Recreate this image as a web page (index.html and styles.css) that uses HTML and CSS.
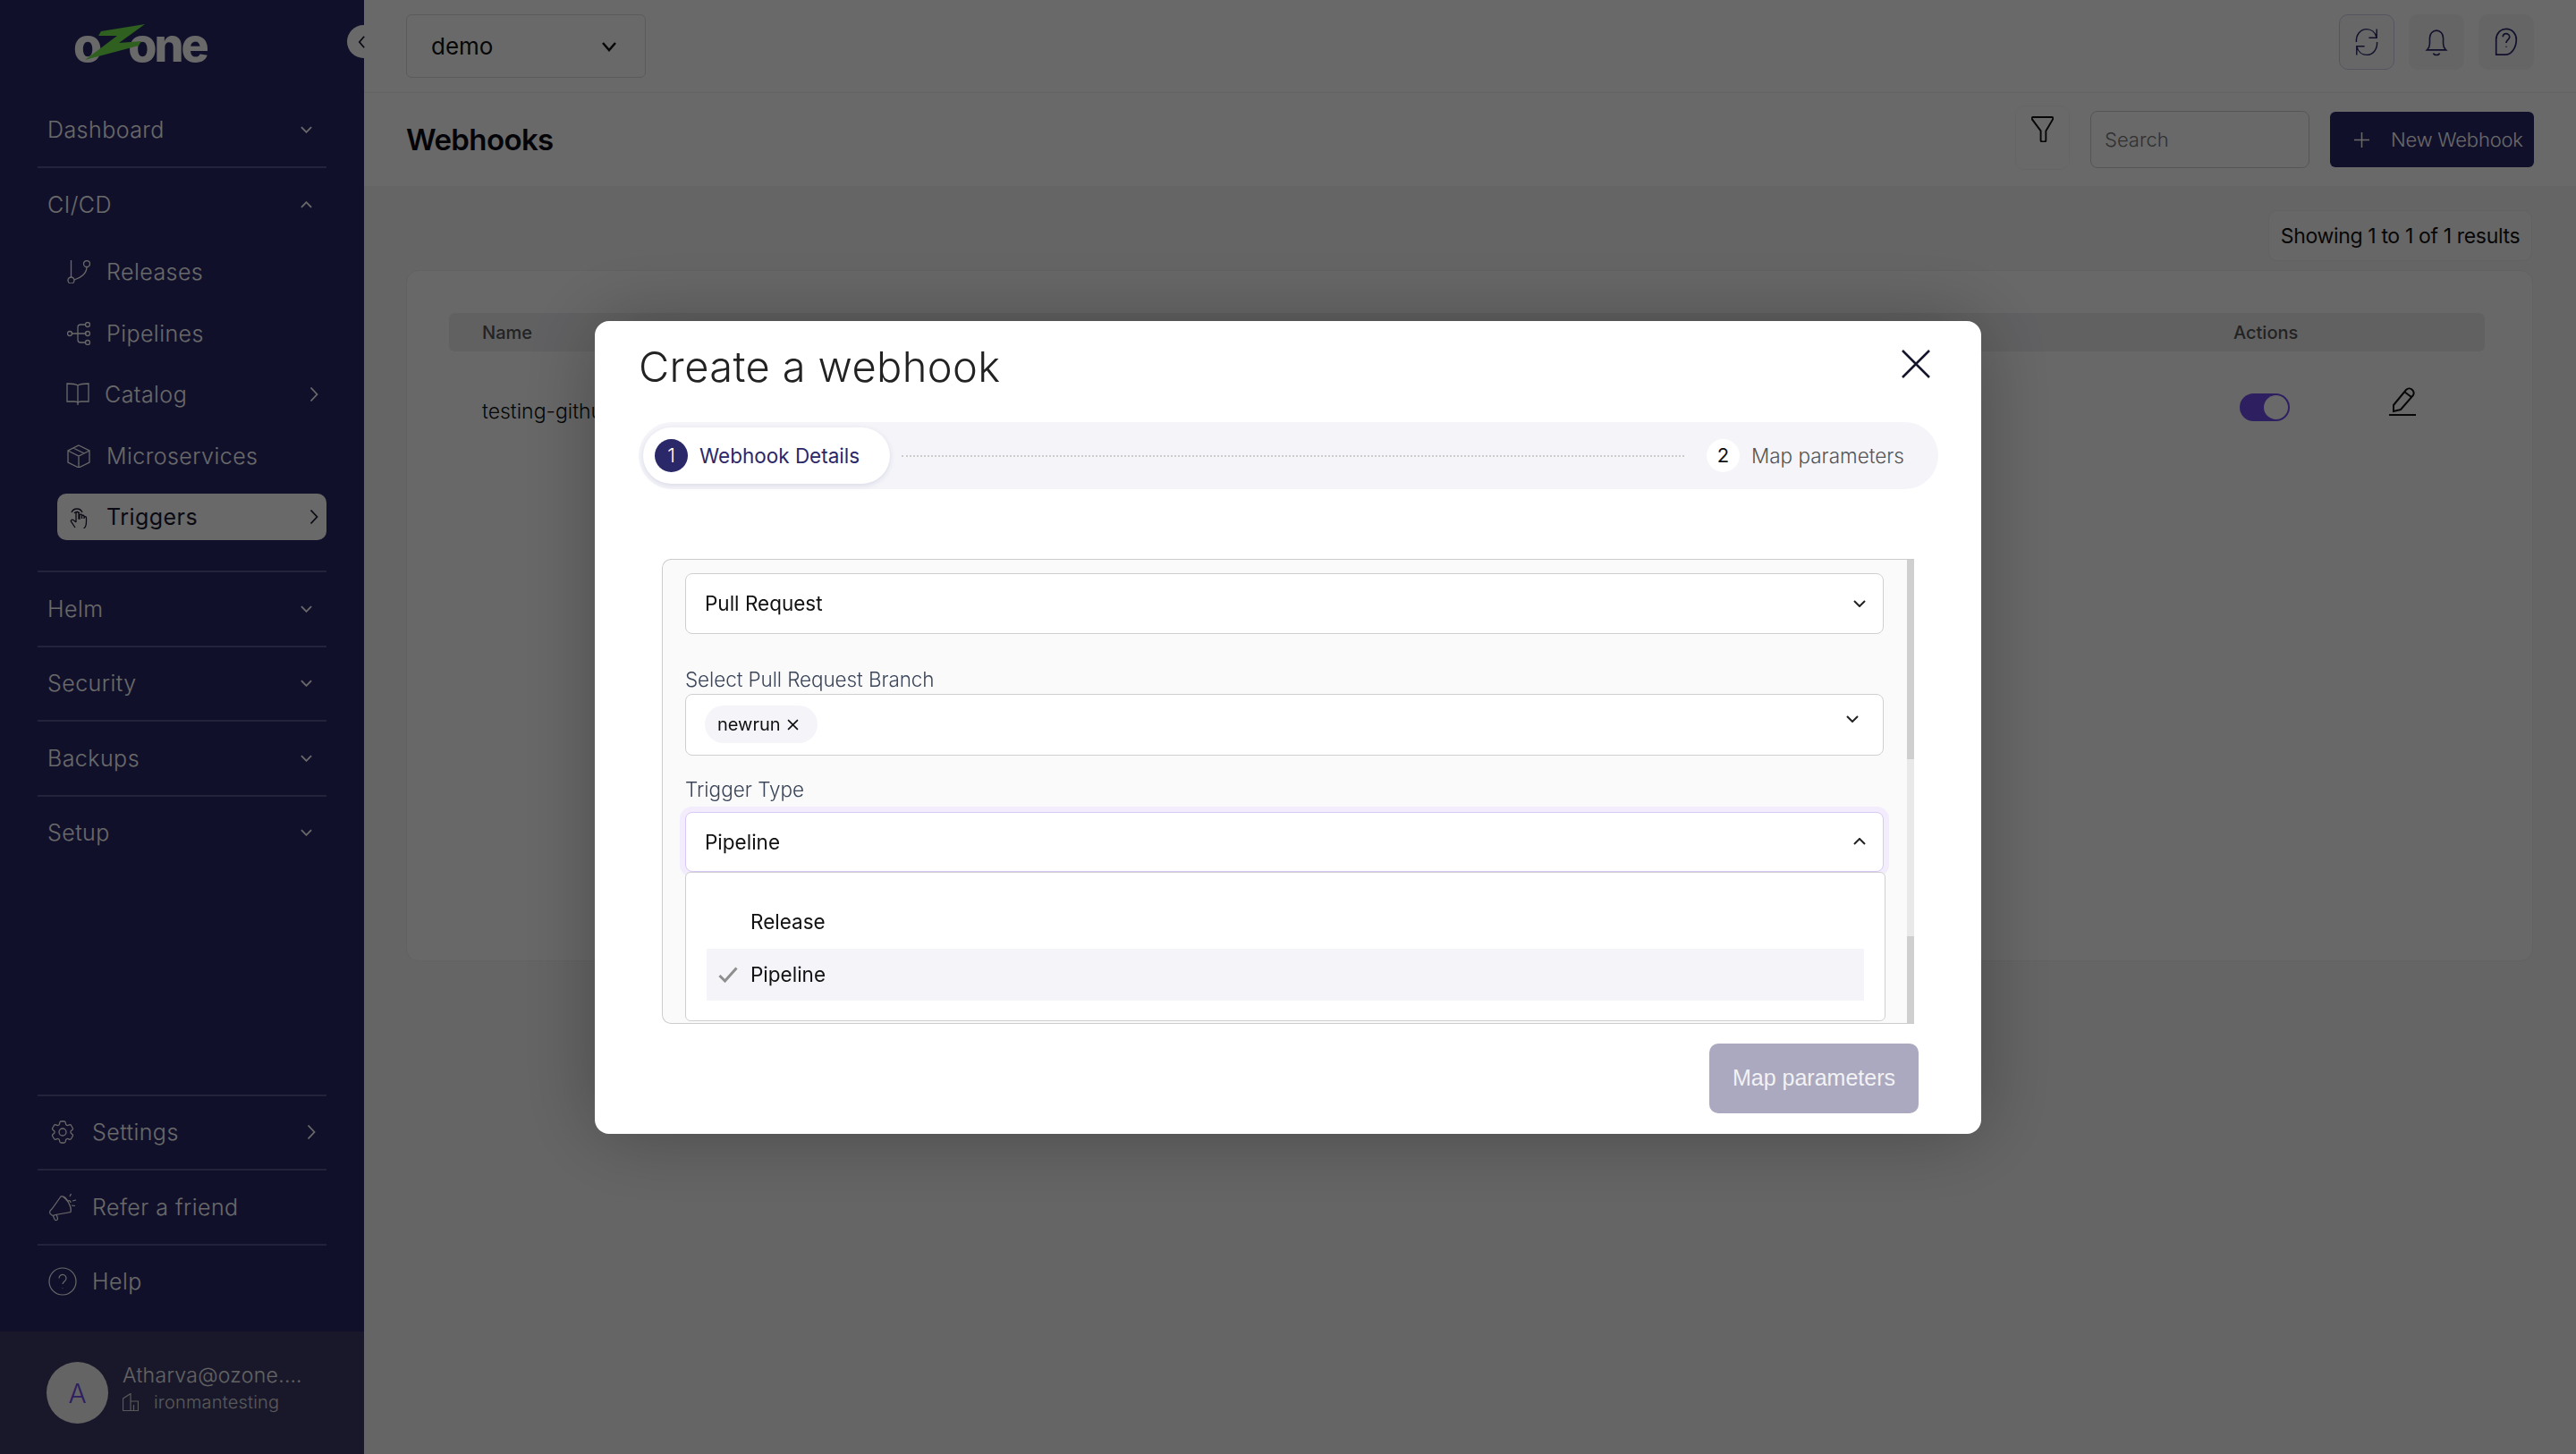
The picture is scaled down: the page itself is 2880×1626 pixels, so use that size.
FILE: index.html
```html
<!DOCTYPE html>
<html lang="en">
<head>
<meta charset="utf-8">
<title>Webhooks</title>
<link rel="stylesheet" href="styles.css">
</head>
<body>
<div class="app">
  <aside class="sidebar">
    <div class="logo"><span>o</span><svg class="bolt" viewBox="0 0 67 40"><polygon points="67,0 18,8 15,13 36,13 0,40 60,24 63,19 38,21"/></svg><span>one</span></div>
    <button class="collapse"><svg viewBox="0 0 10 18"><path d="M8 2 2 9l6 7"/></svg></button>
    <nav class="nav">
      <div class="group"><span class="gl">Dashboard</span><svg class="chev" viewBox="0 0 14 8"><path d="M1 1l6 6 6-6"/></svg></div>
      <div class="group open"><span class="gl">CI/CD</span><svg class="chev" viewBox="0 0 14 8"><path d="M1 7l6-6 6 6"/></svg></div>
      <div class="subs">
        <div class="sub"><svg class="ic" viewBox="0 0 26 26"><path d="M4.5 0v19M22 7.5C22 15 15 20 8 22"/><circle cx="4.5" cy="22.5" r="3.5"/><circle cx="22" cy="4" r="3.5"/></svg><span>Releases</span></div>
        <div class="sub"><svg class="ic" viewBox="0 0 26 26"><circle cx="3" cy="13" r="2.5"/><path d="M5.5 13h16M12 13V6a3 3 0 0 1 3-3h6M12 13v7a3 3 0 0 0 3 3h6"/><circle cx="23" cy="3" r="2.5"/><circle cx="23" cy="13" r="2.5"/><circle cx="23" cy="23" r="2.5"/></svg><span>Pipelines</span></div>
        <div class="sub cat"><svg class="ic" viewBox="0 0 26 26"><path d="M13 23V3C10 1 5 1 1 1v20h8c2 0 4 .5 4 2zM13 3c3-2 8-2 12-2v20h-8c-2 0-4 .5-4 2v2"/></svg><span>Catalog</span><svg class="chr" viewBox="0 0 10 18"><path d="M1.500 1.500 8.500 9l-7 7.500"/></svg></div>
        <div class="sub"><svg class="ic" viewBox="0 0 26 26"><path d="M13 1 25 7v13l-12 6-12-6V7zM1 7l12 6 12-6M13 13v13M7 4l12 6"/></svg><span>Microservices</span></div>
        <div class="sub active"><svg class="ic" viewBox="0 0 26 26"><path d="M5 8a6.500 6.500 0 0 1 12 0M8 9a3.500 3.500 0 0 1 6 0M10 19V9a1.500 1.500 0 0 1 3 0v6l1 0V11a1.300 1.300 0 0 1 2.500 0v4V12a1.300 1.300 0 0 1 2.500 0v3 0-1a1.200 1.200 0 0 1 2.500 0v4c0 4-1 7-3 8M10 19l-3-2.500c-2-1-3.500 1-2 2.500l4 6"/></svg><span>Triggers</span><svg class="chr" viewBox="0 0 10 18"><path d="M1.500 1.500 8.500 9l-7 7.500"/></svg></div>
      </div>
      <div class="group top"><span class="gl">Helm</span><svg class="chev" viewBox="0 0 14 8"><path d="M1 1l6 6 6-6"/></svg></div>
      <div class="group top"><span class="gl">Security</span><svg class="chev" viewBox="0 0 14 8"><path d="M1 1l6 6 6-6"/></svg></div>
      <div class="group top"><span class="gl">Backups</span><svg class="chev" viewBox="0 0 14 8"><path d="M1 1l6 6 6-6"/></svg></div>
      <div class="group top"><span class="gl">Setup</span><svg class="chev" viewBox="0 0 14 8"><path d="M1 1l6 6 6-6"/></svg></div>
    </nav>
    <div class="bottom">
      <div class="bitem"><svg class="bic" viewBox="0 0 24 24"><path d="M9.594 3.940c.09-.542.56-.94 1.110-.94h2.593c.55 0 1.020.398 1.110.94l.213 1.281c.063.374.313.686.645.870.074.04.147.083.22.127.325.196.72.257 1.075.124l1.217-.456a1.125 1.125 0 0 1 1.370.49l1.296 2.247a1.125 1.125 0 0 1-.26 1.431l-1.003.827c-.293.241-.438.613-.43.992a7.723 7.723 0 0 1 0 .255c-.008.378.137.75.43.991l1.004.827c.424.35.534.955.26 1.430l-1.298 2.247a1.125 1.125 0 0 1-1.369.491l-1.217-.456c-.355-.133-.75-.072-1.076.124a6.470 6.470 0 0 1-.22.128c-.331.183-.581.495-.644.869l-.213 1.281c-.09.543-.56.94-1.110.94h-2.594c-.55 0-1.019-.398-1.110-.94l-.213-1.281c-.062-.374-.312-.686-.644-.87a6.520 6.520 0 0 1-.22-.127c-.325-.196-.72-.257-1.076-.124l-1.217.456a1.125 1.125 0 0 1-1.369-.49l-1.297-2.247a1.125 1.125 0 0 1 .26-1.431l1.004-.827c.292-.24.437-.613.43-.991a6.932 6.932 0 0 1 0-.255c.007-.38-.138-.751-.43-.992l-1.004-.827a1.125 1.125 0 0 1-.26-1.430l1.297-2.247a1.125 1.125 0 0 1 1.370-.491l1.216.456c.356.133.751.072 1.076-.124.072-.044.146-.086.22-.128.332-.183.582-.495.644-.869l.214-1.280Z"/><circle cx="12" cy="12" r="3"/></svg><span>Settings</span><svg class="chr" viewBox="0 0 10 18"><path d="M1.500 1.500 8.500 9l-7 7.500"/></svg></div>
      <div class="bitem"><svg class="bic" viewBox="0 0 32 32"><path d="M14 4 4 18c-3 2-3 5-1 6 1 1.500 3 1.500 5 .5l17-3c1-3-1-8-3-12S17 3 14 4zM14 4c2-1 5 2 8 6s4 9 3 11.500M5 25l2 4.500c1 2 4 1 3.500-1L9 24M22 9c2-1 3 .5 3 2M24 4l1.500-3M27 9l4-1M26 14l4 .5"/></svg><span>Refer a friend</span></div>
      <div class="bitem"><svg class="bic" viewBox="0 0 32 32"><circle cx="16" cy="16" r="15"/><path d="M12 12.500a4 4 0 1 1 6.500 3c-1.500 1.200-2.500 2-2.500 3.500M16 23v.5"/></svg><span>Help</span></div>
    </div>
    <div class="account">
      <div class="avatar">A</div>
      <div class="who">
        <div class="email">Atharva@ozone.one</div>
        <div class="org"><svg class="bld" viewBox="0 0 18 20"><path d="M.5 19.500V6L9 .5v19zM9 9h8.500v10.500M0 19.500h18M12.500 13v6"/></svg><span>ironmantesting</span></div>
      </div>
    </div>
  </aside>

  <main class="main">
    <header class="topbar">
      <div class="tenant"><span>demo</span><svg viewBox="0 0 18 12"><path d="M2 2l7 8 7-8"/></svg></div>
      <div class="tools">
        <button class="tool on"><svg viewBox="0 0 32 40"><path d="M30 14C28 6 22 2 16 2 7 2 1 10 1.500 20M30 2v12H19M2 26c2 8 8 12 14 12 9 0 15-8 14.500-18M2 38V26h11"/></svg></button>
        <button class="tool"><svg viewBox="0 0 26 36"><path d="M1 28c2-2 3.500-3 3.500-8v-7a8.500 9.500 0 0 1 17 0v7c0 5 1.500 6 3.500 8zM9 32c1 3 7 3 8 0"/></svg></button>
        <button class="tool"><svg viewBox="0 0 26 34"><path d="M1 32V14C1 7 6 1.500 13 1.500S25 7 25 14c0 10-6 18-13 18zM9 11c0-3 2-4 4-4s4 2 4 4c0 3-4 3.500-4 7M13 22v1"/></svg></button>
      </div>
    </header>
    <section class="pagehead">
      <h1>Webhooks</h1>
      <div class="actions">
        <button class="filter"><svg viewBox="0 0 26 30"><path d="M2 1h22c1 0 1.500 1 1 2.500L17 17v11c0 1.500-1 1.500-2 1.500h-2c-1.500 0-2-.5-2-1.500V17L1 3.500C.5 2 1 1 2 1z"/></svg></button>
        <div class="search">Search</div>
        <button class="new"><svg viewBox="0 0 18 18"><path d="M9 0v18M0 9h18"/></svg><span>New Webhook</span></button>
      </div>
    </section>
    <section class="content">
      <div class="countwrap"><div class="count">Showing 1 to 1 of 1 results</div></div>
      <div class="card">
        <div class="thead"><span>Name</span><span>Actions</span></div>
        <div class="trow">
          <span class="tname">testing-github</span>
          <div class="tact">
            <span class="toggle"><i></i></span>
            <svg class="pencil" viewBox="0 0 30 32"><path d="M5 20 19 3c2-2 5-2 7 0s2 4 1 6L13 25l-8 2zM17 5l8 6M0 31h30"/></svg>
          </div>
        </div>
      </div>
    </section>
  </main>
</div>

<div class="overlay">
  <div class="modal">
    <div class="mhead">
      <h2>Create a webhook</h2>
      <svg class="close" viewBox="0 0 32 32"><path d="M1 1l30 30M31 1 1 31"/></svg>
    </div>
    <div class="stepper">
      <div class="step active"><b>1</b><span>Webhook Details</span></div>
      <div class="dots"></div>
      <div class="step next"><b>2</b><span>Map parameters</span></div>
    </div>
    <div class="frame">
      <div class="form">
        <div class="select first"><span>Pull Request</span><svg class="sel-chev" viewBox="0 0 14 8"><path d="M1 1l6 6 6-6"/></svg></div>
        <label class="lab lab1">Select Pull Request Branch</label>
        <div class="multi"><span class="chip">newrun<svg viewBox="0 0 12 12"><path d="M1 1l10 10M11 1 1 11"/></svg></span><svg class="sel-chev" viewBox="0 0 14 8"><path d="M1 1l6 6 6-6"/></svg></div>
        <label class="lab lab2">Trigger Type</label>
        <div class="select focus"><span>Pipeline</span><svg class="sel-chev" viewBox="0 0 14 8"><path d="M1 7l6-6 6 6"/></svg></div>
        <div class="drop">
          <div class="opt"><span>Release</span></div>
          <div class="opt sel"><svg viewBox="0 0 22 18"><path d="M1.500 10l6 6L20.500 1.500"/></svg><span>Pipeline</span></div>
        </div>
        <label class="lab lab3">Select Pipeline Name</label>
      </div>
      <div class="bar"><i class="t1"></i><i class="t2"></i><i class="t3"></i></div>
    </div>
    <div class="mfoot"><button class="primary">Map parameters</button></div>
  </div>
</div>
</body>
</html>
```

FILE: styles.css
```css
* { box-sizing: border-box; }
html, body { margin: 0; height: 100%; }
body { width: 2880px; height: 1626px; overflow: hidden; font-family: Inter, "Noto Sans", sans-serif; color: #1a1a33; background: #f4f4f7; }
button { font: inherit; border: 0; padding: 0; background: none; color: inherit; }
svg { fill: none; stroke: currentColor; display: block; flex: none; }
h1, h2 { margin: 0; font-weight: 400; }

.app { display: flex; height: 1626px; }

/* sidebar */
.sidebar { position: relative; width: 407px; flex: none; display: flex; flex-direction: column; background: #2a2869; color: #fff; font-size: 25px; }
.logo { height: 104px; padding: 27px 0 0 82px; display: flex; align-items: flex-start; font-size: 52px; font-weight: 800; letter-spacing: -3px; line-height: 40px; color: #fff; }
.logo span { display: block; padding-top: 4px; }
.bolt { width: 67px; height: 40px; margin: 0 -19px 0 -16px; fill: #72e84e; stroke: none; position: relative; z-index: 1; }
.collapse { position: absolute; left: 388px; top: 28px; width: 37px; height: 37px; border-radius: 50%; background: #fff; display: flex; align-items: center; justify-content: center; color: #1a1a33; z-index: 2; padding-right: 5px; }
.collapse svg { width: 9px; height: 16px; stroke-width: 2; }

.nav { padding: 0 42px; }
.group { height: 84px; padding: 0 15px 0 11px; display: flex; align-items: center; justify-content: space-between; }
.group:first-child { border-bottom: 2px solid #575591; }
.group.open { height: 82px; }
.group.top { height: 83.500px; border-top: 2px solid #575591; }
.gl { letter-spacing: .45px; font-weight: 300; }
.chev { width: 13px; height: 8px; stroke-width: 2; margin-right: 1px; }
.subs { padding: 0 0 34px 22px; }
.sub { height: 68.500px; display: flex; align-items: center; padding-left: 11px; font-weight: 300; letter-spacing: .45px; }
.sub .ic { width: 26px; height: 26px; stroke-width: 1.300; margin-right: 18px; }
.sub.cat .ic { margin-left: -1px; margin-right: 17px; }
.sub .chr { margin-left: auto; width: 10px; height: 18px; stroke-width: 1.800; margin-right: 9px; }
.sub.active { height: 52px; margin-top: 8px; background: #fff; color: #1a1a33; border-radius: 10px; font-weight: 400; }

.bottom { margin-top: auto; padding: 0 42px 15px; }
.bitem { height: 83.500px; display: flex; align-items: center; padding-left: 12px; border-top: 2px solid #575591; font-weight: 300; letter-spacing: .45px; }
.bic { width: 32px; height: 32px; stroke-width: 1.200; margin-right: 17px; }
.bitem .chr { margin-left: auto; width: 10px; height: 18px; stroke-width: 1.800; margin-right: 12px; }
.bitem:first-child .bic { stroke-width: .95; }
.account { height: 137px; background: #3e3c68; padding: 34px 0 0 52px; display: flex; gap: 16px; }
.avatar { width: 69px; height: 69px; border-radius: 50%; background: #f3f3f5; color: #6f4cea; display: flex; align-items: center; justify-content: center; font-size: 30px; font-weight: 300; }
.who { width: 204px; }
.email { font-size: 23px; font-weight: 300; line-height: 30px; letter-spacing: .3px; white-space: nowrap; overflow: hidden; text-overflow: ellipsis; color: #f0f0f0; }
.org { display: flex; align-items: center; gap: 17px; font-size: 20px; font-weight: 300; line-height: 30px; margin-top: 0; white-space: nowrap; letter-spacing: .2px; color: #d8d8d8; }
.bld { width: 18px; height: 20px; stroke-width: 1.200; }

/* main */
.main { flex: 1; min-width: 0; display: flex; flex-direction: column; }
.topbar { height: 104px; flex: none; background: #fff; border-bottom: 1px solid #f0f0f2; padding: 16px 47px 0; display: flex; justify-content: space-between; align-items: flex-start; }
.tenant { width: 268px; height: 71px; border: 1px solid #dcdcdc; border-radius: 6px; display: flex; align-items: center; justify-content: space-between; padding: 0 31px 0 27px; font-size: 26px; color: #111; }
.tenant svg { width: 18px; height: 12px; stroke-width: 2.500; }
.tools { display: flex; gap: 16px; }
.tool { width: 62px; height: 62px; border-radius: 10px; background: #f6f6f8; display: flex; align-items: center; justify-content: center; color: #2a2869; }
.tool.on { border: 1px solid #cfcfe8; background: #fafafa; }
.tool svg { height: 32px; width: 26px; stroke-width: 1.800; }
.pagehead { height: 104px; flex: none; background: #fff; padding: 0 47px; display: flex; align-items: center; justify-content: space-between; }
h1 { font-size: 33px; font-weight: 600; color: #0c0c14; letter-spacing: -.6px; }
.actions { display: flex; align-items: center; }
.filter { width: 61px; height: 72px; margin: -4px 23px 0 0; border: 1px solid #f6f6f6; border-radius: 10px; display: flex; align-items: center; justify-content: center; color: #111; padding-bottom: 20px; }
.filter svg { width: 25px; height: 29px; stroke-width: 2; }
.search { width: 245px; height: 64px; border: 1px solid #cfcfcf; border-radius: 8px; display: flex; align-items: center; padding-left: 15px; color: #777; font-size: 22px; font-weight: 300; margin-right: 23px; }
.new { width: 228px; height: 62px; background: #2a2869; color: #fff; border-radius: 6px; display: flex; align-items: center; padding-left: 27px; font-size: 22px; font-weight: 300; gap: 24px; white-space: nowrap; letter-spacing: -.2px; }
.new svg { width: 17px; height: 17px; stroke-width: 1.600; }
.content { flex: 1; padding: 27px 48px 0 47px; }
.countwrap { display: flex; justify-content: flex-end; }
.count { height: 57px; width: 295px; margin-right: 1px; border: 1px solid #ededed; border-radius: 10px; background: #fbfbfb; display: flex; align-items: center; justify-content: center; font-size: 23px; color: #111; white-space: nowrap; letter-spacing: -.35px; }
.card { height: 773px; margin-top: 10px; background: #fdfdfd; border: 1px solid #ededed; border-radius: 14px; padding: 47px 53px 0 47px; }
.thead { height: 43px; background: #ececef; border-radius: 6px; display: grid; grid-template-columns: 1958px 1fr; align-items: center; padding-left: 37px; margin-left: 0; font-size: 20px; color: #555; font-weight: 500; }
.thead span:first-child, .tname { grid-column: 1; }
.trow { display: grid; grid-template-columns: 1958px 1fr; padding-left: 37px; height: 110px; }
.tname { font-size: 23px; color: #111; font-weight: 300; padding-top: 53px; }
.tact { display: flex; align-items: flex-start; padding: 47px 0 0 7px; gap: 111px; }
.toggle { width: 56px; height: 31px; border-radius: 16px; background: #6f4cea; padding: 2px; display: flex; justify-content: flex-end; }
.toggle i { width: 27px; height: 27px; border-radius: 50%; background: #fff; }
.pencil { width: 30px; height: 32px; stroke-width: 2; color: #111; margin-top: -7px; }

/* overlay + modal */
.overlay { position: fixed; inset: 0; z-index: 10; background: rgba(0, 0, 0, .59); display: flex; align-items: center; justify-content: center; }
.modal { width: 1550px; height: 909px; background: #fff; border-radius: 16px; box-shadow: 0 0 90px rgba(0, 0, 0, .28); display: flex; flex-direction: column; color: #111; }
.mhead { height: 113px; flex: none; padding: 32px 57px 0 49px; display: flex; justify-content: space-between; align-items: flex-start; }
h2 { font-size: 47px; font-weight: 300; color: #222; line-height: 38px; padding-top: 0; letter-spacing: .4px; }
.close { width: 32px; height: 32px; stroke-width: 2.500; color: #14142b; margin-top: 0; }
.stepper { height: 75px; flex: none; margin: 0 48px 0 49px; background: #f4f4f9; border-radius: 38px; display: flex; align-items: center; padding: 0 38px 0 5px; font-size: 22.500px; }
.step { display: flex; align-items: center; white-space: nowrap; }
.step b { width: 37px; height: 37px; border-radius: 50%; display: flex; align-items: center; justify-content: center; font-weight: 400; font-size: 22px; flex: none; }
.step.active { width: 276px; height: 63px; background: #fff; border-radius: 32px; box-shadow: 0 2px 6px rgba(42, 40, 104, .12); padding-left: 13px; gap: 13px; color: #2a2868; }
.step.active b { background: #2a2868; color: #fff; font-weight: 300; }
.step.next { gap: 13px; color: #555; font-weight: 300; }
.step.next b { background: #fff; color: #111; }
.dots { flex: 1; margin: 2px 25px 0 13px; border-top: 2px dotted #ccc; }
.frame { height: 520px; flex: none; margin: 78px 75px 0; display: flex; border-top: 1px solid #ccc; border-bottom: 1px solid #ccc; border-left: 1px solid #ccc; border-radius: 10px 0 0 10px; background: #fafafa; overflow: hidden; }
.form { flex: 1; min-width: 0; padding: 15px 26px 0 25px; font-size: 22.500px; overflow: hidden; }
.select, .multi { display: flex; align-items: center; justify-content: space-between; background: #fff; border: 1px solid #cfcfcf; border-radius: 8px; }
.select { padding: 0 19px 0 21px; height: 68px; }
.multi { height: 69px; padding: 0 27px 12px 21px; }
.multi .chip { margin-top: 12px; }
.select.focus { height: 67px; border-color: #d8c8f5; box-shadow: 0 0 0 6px #f2ecfd; position: relative; }
.sel-chev { width: 14px; height: 8px; stroke-width: 2; color: #222; }
.lab { display: block; line-height: 24px; color: #3b4559; font-weight: 300; }
.lab1 { margin: 39px 0 4px; letter-spacing: -.1px; }
.lab2 { margin: 26px 0 13px; }
.chip { display: flex; align-items: center; gap: 7px; height: 42px; padding: 0 21px 0 14px; border-radius: 21px; background: #f4f4f9; font-size: 20px; font-weight: 400; color: #111; }
.chip svg { width: 13px; height: 13px; stroke-width: 1.500; }
.drop { position: relative; height: 167px; margin-right: -2px; background: #fff; border: 1px solid #cfcfcf; border-radius: 6px; padding: 25px 23px 0 23px; }
.opt { height: 59px; display: flex; align-items: center; padding-left: 49px; position: relative; }
.opt.sel { height: 58px; margin-top: 1px; background: #f4f4f9; padding-left: 13px; gap: 14px; }
.opt.sel svg { width: 22px; height: 18px; stroke-width: 3; color: #8e8e8e; }
.lab3 { margin-top: 1px; color: #222; }
.bar { width: 8px; flex: none; display: flex; flex-direction: column; }
.bar i { display: block; }
.t1 { height: 223px; background: #cfcfcf; }
.t2 { height: 198px; background: #e9e9e9; }
.t3 { flex: 1; background: #cfcfcf; }
.mfoot { flex: 1; display: flex; justify-content: flex-end; padding: 22px 70px 0 0; }
.primary { width: 234px; height: 78px; border-radius: 10px; background: #aba9bf; color: #f2f2f5; font-family: "Liberation Sans", Arial, sans-serif; font-size: 25px; }
```
